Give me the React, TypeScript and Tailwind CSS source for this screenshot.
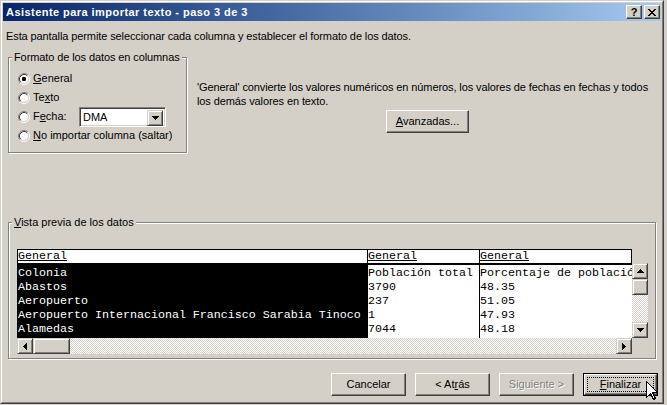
import type { ReactNode } from 'react'

// classic 3D edges
const raised =
  'border border-t-white border-l-white border-r-[#404040] border-b-[#404040] shadow-[inset_-1px_-1px_0_#808080] bg-[#d4d0c8]'
const scrollBtn =
  'flex items-center justify-center shrink-0 w-[16px] h-[16px] border border-t-[#d4d0c8] border-l-[#d4d0c8] border-r-[#404040] border-b-[#404040] shadow-[inset_1px_1px_0_#fff,inset_-1px_-1px_0_#808080] bg-[#d4d0c8]'
const groupBox =
  'relative border border-[#808080] shadow-[inset_1px_1px_0_#fff,1px_1px_0_#fff]'
const checker =
  'bg-[repeating-conic-gradient(#fff_0_25%,#d4d0c8_0_50%)] bg-[length:2px_2px]'

type Dir = 'up' | 'down' | 'left' | 'right'

function Arrow({ dir }: { dir: Dir }) {
  // pixel triangle, rows of 7,5,3,1
  const rows = [0, 1, 2, 3]
  const vertical = dir === 'up' || dir === 'down'
  return (
    <svg width={vertical ? 7 : 4} height={vertical ? 4 : 7} shapeRendering="crispEdges">
      {rows.map((i) => {
        const len = 7 - i * 2
        const k = dir === 'down' || dir === 'right' ? i : 3 - i
        return vertical ? (
          <rect key={i} x={i} y={k} width={len} height={1} fill="#000" />
        ) : (
          <rect key={i} x={k} y={i} width={1} height={len} fill="#000" />
        )
      })}
    </svg>
  )
}

function Radio({ checked }: { checked?: boolean }) {
  return (
    <svg width="12" height="12" viewBox="0 0 12 12" className="shrink-0">
      <circle cx="6" cy="6" r="4.5" fill="#fff" />
      <path d="M2.11 9.89 A5.5 5.5 0 0 1 9.89 2.11" stroke="#808080" fill="none" />
      <path d="M9.89 2.11 A5.5 5.5 0 0 1 2.11 9.89" stroke="#fff" fill="none" />
      <path d="M2.82 9.18 A4.5 4.5 0 0 1 9.18 2.82" stroke="#404040" fill="none" />
      <path d="M9.18 2.82 A4.5 4.5 0 0 1 2.82 9.18" stroke="#d4d0c8" fill="none" />
      {checked && <rect x="4" y="4" width="4" height="4" rx="1.2" fill="#000" />}
    </svg>
  )
}

function RadioRow({ checked, children }: { checked?: boolean; children: ReactNode }) {
  return (
    <div className="flex items-center h-[19px] gap-[3px]">
      <Radio checked={checked} />
      {children}
    </div>
  )
}

function PushButton({ children, disabled }: { children: ReactNode; disabled?: boolean }) {
  return (
    <div
      className={`w-[75px] h-[23px] flex items-center justify-center ${raised} ${
        disabled ? 'text-[#808080] [text-shadow:1px_1px_0_#fff]' : ''
      }`}
    >
      {children}
    </div>
  )
}

const colonias = [
  'Colonia',
  'Abastos',
  'Aeropuerto',
  'Aeropuerto Internacional Francisco Sarabia Tinoco',
  'Alamedas',
]
const poblacion = ['Población total', '3790', '237', '1', '7044']
const porcentaje = ['Porcentaje de población', '48.35', '51.05', '47.93', '48.18']

function Cells({ items }: { items: string[] }) {
  return (
    <div className="pt-[1px]">
      {items.map((t, i) => (
        <div key={i} className="h-[14px] leading-[14px] whitespace-pre">
          {t}
        </div>
      ))}
    </div>
  )
}

function Preview() {
  return (
    <div className="flex w-[631px] h-[105px] bg-[#d4d0c8] font-['Liberation_Mono',monospace] text-[11.67px]">
      <div className="flex flex-col w-[615px]">
        <div className="h-[89px] overflow-hidden flex flex-col">
          {/* header */}
          <div className="flex h-[16px] border-t border-b-2 border-black bg-white">
            <div className="w-[351px] border-x border-black leading-[13px] underline underline-offset-[1px]">
              General
            </div>
            <div className="w-[112px] border-r border-black leading-[13px]">
              <span className="underline underline-offset-[1px]">General</span>
            </div>
            <div className="flex-1 border-r border-black leading-[13px]">
              <span className="underline underline-offset-[1px]">General</span>
            </div>
          </div>
          {/* data */}
          <div className="flex flex-1">
            <div className="w-[351px] bg-black text-white border-x border-black overflow-hidden">
              <Cells items={colonias} />
            </div>
            <div className="w-[112px] bg-white border-r border-black overflow-hidden">
              <Cells items={poblacion} />
            </div>
            <div className="flex-1 bg-white overflow-hidden">
              <Cells items={porcentaje} />
            </div>
          </div>
        </div>
        {/* horizontal scrollbar */}
        <div className="flex h-[16px]">
          <div className={scrollBtn}>
            <Arrow dir="left" />
          </div>
          <div className={`${scrollBtn} w-[37px]`} />
          <div className={`flex-1 ${checker}`} />
          <div className={scrollBtn}>
            <Arrow dir="right" />
          </div>
        </div>
      </div>
      {/* vertical scrollbar */}
      <div className="w-[16px] mt-[14px] h-[75px] flex flex-col">
        <div className={scrollBtn}>
          <Arrow dir="up" />
        </div>
        <div className={scrollBtn} />
        <div className={`flex-1 ${checker}`} />
        <div className={scrollBtn}>
          <Arrow dir="down" />
        </div>
      </div>
    </div>
  )
}

export default function App() {
  return (
    <div className="relative w-[667px] h-[405px] bg-[#d4d0c8] text-black text-[11px] font-['Liberation_Sans',Arial,sans-serif]">
      <div className="w-[664px] h-[404px] border border-t-[#d4d0c8] border-l-[#d4d0c8] border-r-[#404040] border-b-[#404040]">
        <div className="h-full border border-t-white border-l-white border-r-[#808080] border-b-[#808080] p-[1px] flex flex-col">
          {/* title bar */}
          <div className="h-[18px] shrink-0 flex items-center bg-gradient-to-r from-[#0a246a] to-[#a6caf0]">
            <span className="pl-[3px] text-white font-bold leading-[18px] tracking-[0.45px]">
              Asistente para importar texto - paso 3 de 3
            </span>
            <div className="ml-auto mr-[1px] flex gap-[2px]">
              <div className={`w-[16px] h-[14px] flex items-center justify-center font-bold text-[11px] leading-none ${raised}`}>
                ?
              </div>
              <div className={`w-[16px] h-[14px] flex items-center justify-center ${raised}`}>
                <svg width="8" height="7" viewBox="0 0 8 7" shapeRendering="crispEdges">
                  <path d="M0 0h2l2 2.5L6 0h2L5 3.5 8 7H6L4 4.5 2 7H0l3-3.5z" fill="#000" />
                </svg>
              </div>
            </div>
          </div>

          <p className="mt-[9px] pl-[3px] leading-[13px] whitespace-nowrap tracking-[-0.1px]">
            Esta pantalla permite seleccionar cada columna y establecer el formato de los datos.
          </p>

          {/* top section */}
          <div className="mt-[14px] flex items-start">
            <div className={`ml-[5px] w-[179px] h-[96px] pt-[11px] pl-[9px] ${groupBox}`}>
              <span className="absolute -top-[7px] left-[3px] px-[2px] bg-[#d4d0c8] leading-[13px] whitespace-nowrap tracking-[-0.1px]">
                Formato de los datos en columnas
              </span>
              <RadioRow checked>
                <span>
                  <u>G</u>eneral
                </span>
              </RadioRow>
              <RadioRow>
                <span>
                  Te<u>x</u>to
                </span>
              </RadioRow>
              <RadioRow>
                <span className="w-[43px]">
                  F<u>e</u>cha:
                </span>
                <div className="w-[87px] h-[20px] flex border border-t-[#808080] border-l-[#808080] border-b-white border-r-white shadow-[inset_1px_1px_0_#404040,inset_-1px_-1px_0_#d4d0c8] bg-white p-[2px]">
                  <span className="flex-1 pl-[1px] leading-[14px]">DMA</span>
                  <div className={`${scrollBtn} w-[15px] h-[14px]`}>
                    <Arrow dir="down" />
                  </div>
                </div>
              </RadioRow>
              <RadioRow>
                <span className="whitespace-nowrap">
                  <u>N</u>o importar columna (saltar)
                </span>
              </RadioRow>
            </div>

            <div className="ml-[10px] mt-[23px] flex flex-col">
              <p className="leading-[14px] whitespace-nowrap tracking-[-0.1px]">
                'General' convierte los valores numéricos en números, los valores de fechas en fechas y todos
                <br />
                los demás valores en texto.
              </p>
              <div className={`mt-[2px] ml-[189px] w-[83px] h-[23px] flex items-center justify-center ${raised}`}>
                <span>
                  <u>A</u>vanzadas...
                </span>
              </div>
            </div>
          </div>

          {/* preview */}
          <div className={`mt-[69px] ml-[5px] w-[648px] h-[137px] pt-[26px] pl-[8px] ${groupBox}`}>
            <span className="absolute -top-[7px] left-[3px] px-[2px] bg-[#d4d0c8] leading-[13px] whitespace-nowrap">
              <u>V</u>ista previa de los datos
            </span>
            <Preview />
          </div>

          {/* buttons */}
          <div className="mt-[14px] flex justify-end gap-[9px] pr-[3px]">
            <PushButton>Cancelar</PushButton>
            <PushButton>
              <span>
                &lt; At<u>r</u>ás
              </span>
            </PushButton>
            <PushButton disabled>Siguiente &gt;</PushButton>
            <div className="w-[75px] h-[23px] border border-black">
              <div className={`relative w-full h-full flex items-center justify-center ${raised}`}>
                <span className="absolute inset-[2px] border border-dotted border-black" />
                <span>
                  <u>F</u>inalizar
                </span>
              </div>
            </div>
          </div>
        </div>
      </div>

      {/* mouse pointer */}
      <svg className="absolute left-[646px] top-[381px]" width="12" height="20" viewBox="0 0 12 20" shapeRendering="crispEdges">
        <path d="M0.5 0.5V16.5L4.5 12.5L7.5 18.5L9.5 17.5L6.5 11.5H11.5Z" fill="#fff" stroke="#000" />
      </svg>
    </div>
  )
}
